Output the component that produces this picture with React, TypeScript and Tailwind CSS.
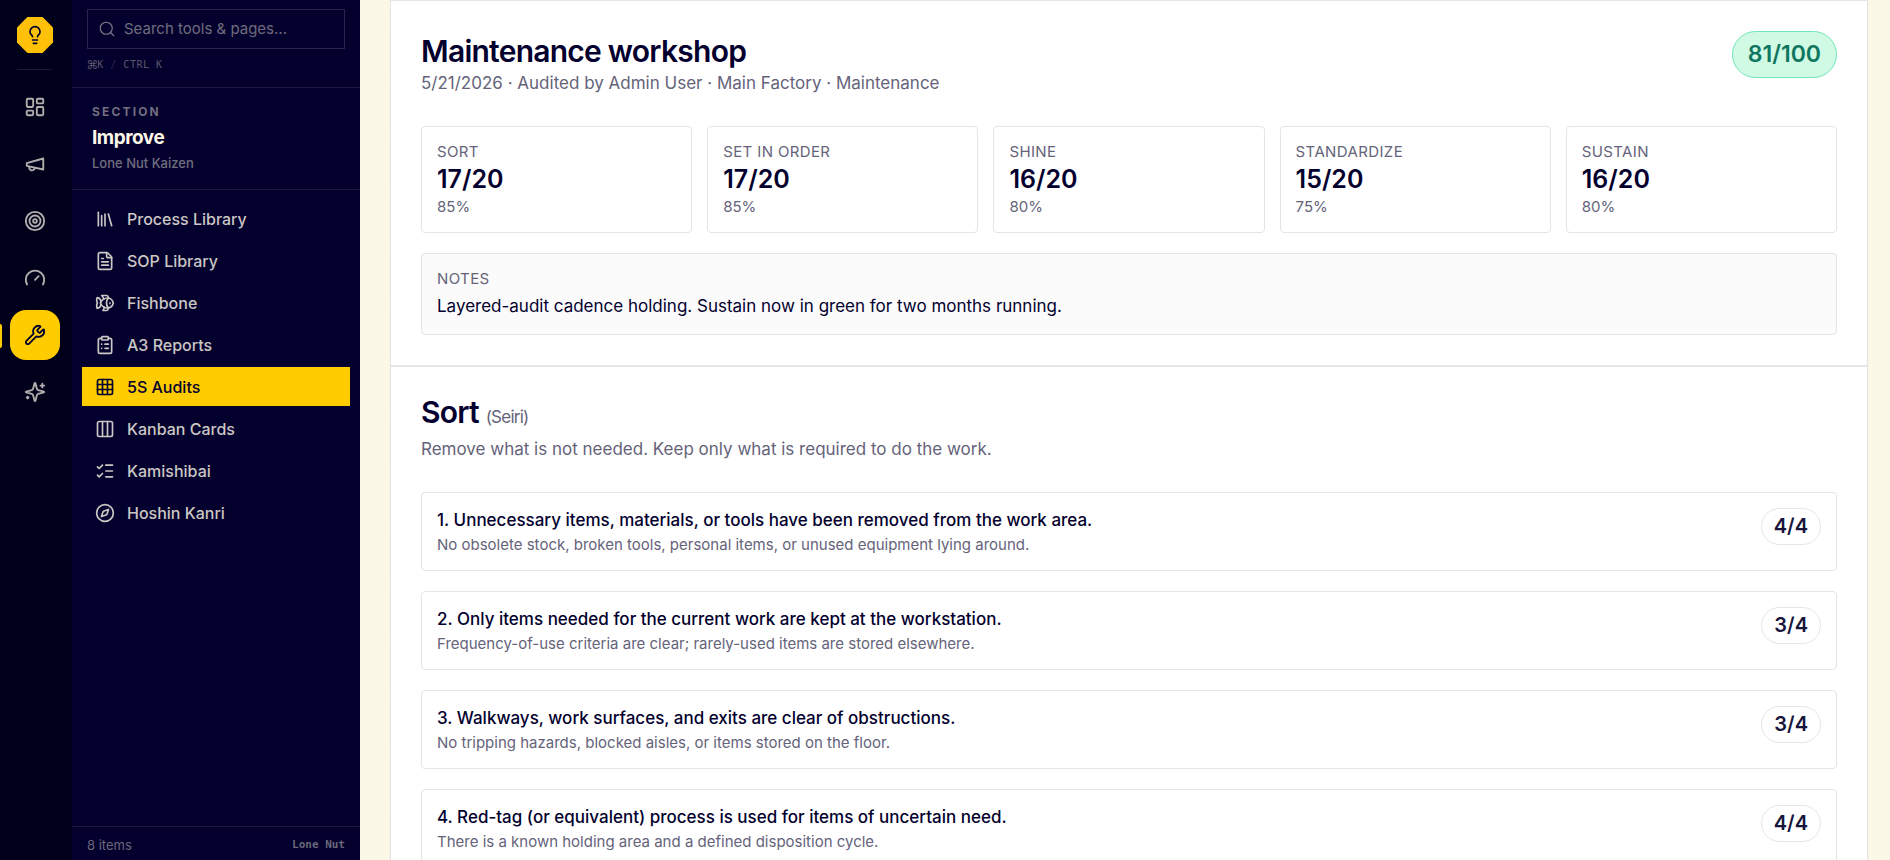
import { useState } from "react";
import type { ReactNode } from "react";
import {
	ClipboardList,
	Columns3,
	Compass,
	FileText,
	Fish,
	Gauge,
	Grid3x3,
	LayoutDashboard,
	Library,
	Lightbulb,
	ListChecks,
	Search,
	Target,
	Wrench,
} from "lucide-react";
import type { LucideIcon } from "lucide-react";

const MegaphoneIcon = () => (
	<RailSvg>
		<path d="m3 11 18-5v12L3 14v-3z" />
		<path d="M11.6 16.8a3 3 0 1 1-5.8-1.6" />
	</RailSvg>
);

const SparklesIcon = () => (
	<RailSvg>
		<path d="M9.937 15.5A2 2 0 0 0 8.5 14.063l-6.135-1.582a.5.5 0 0 1 0-.962L8.5 9.936A2 2 0 0 0 9.937 8.5l1.582-6.135a.5.5 0 0 1 .963 0L14.063 8.5A2 2 0 0 0 15.5 9.937l6.135 1.581a.5.5 0 0 1 0 .964L15.5 14.063a2 2 0 0 0-1.437 1.437l-1.582 6.135a.5.5 0 0 1-.963 0z" />
		<path d="M20 3v4M22 5h-4M4 17v2M5 18H3" />
	</RailSvg>
);

function RailSvg({ children }: { children: ReactNode }) {
	return (
		<svg
			viewBox="0 0 24 24"
			className="size-[22px]"
			fill="none"
			stroke="currentColor"
			strokeWidth={2}
			strokeLinecap="round"
			strokeLinejoin="round"
			aria-hidden="true"
		>
			{children}
		</svg>
	);
}

const RAIL: Array<{ label: string; icon: ReactNode }> = [
	{ label: "Dashboard", icon: <LayoutDashboard className="size-[22px]" /> },
	{ label: "Announce", icon: <MegaphoneIcon /> },
	{ label: "Goals", icon: <Target className="size-[22px]" /> },
	{ label: "Measure", icon: <Gauge className="size-[22px]" /> },
	{ label: "Improve", icon: <Wrench className="size-[22px]" /> },
	{ label: "Assistant", icon: <SparklesIcon /> },
];

const NAV: Array<{ label: string; icon: LucideIcon }> = [
	{ label: "Process Library", icon: Library },
	{ label: "SOP Library", icon: FileText },
	{ label: "Fishbone", icon: Fish },
	{ label: "A3 Reports", icon: ClipboardList },
	{ label: "5S Audits", icon: Grid3x3 },
	{ label: "Kanban Cards", icon: Columns3 },
	{ label: "Kamishibai", icon: ListChecks },
	{ label: "Hoshin Kanri", icon: Compass },
];

const SCORES = [
	{ label: "Sort", score: 17 },
	{ label: "Set in order", score: 17 },
	{ label: "Shine", score: 16 },
	{ label: "Standardize", score: 15 },
	{ label: "Sustain", score: 16 },
];

const SORT_ITEMS = [
	{
		title: "Unnecessary items, materials, or tools have been removed from the work area.",
		hint: "No obsolete stock, broken tools, personal items, or unused equipment lying around.",
		score: 4,
	},
	{
		title: "Only items needed for the current work are kept at the workstation.",
		hint: "Frequency-of-use criteria are clear; rarely-used items are stored elsewhere.",
		score: 3,
	},
	{
		title: "Walkways, work surfaces, and exits are clear of obstructions.",
		hint: "No tripping hazards, blocked aisles, or items stored on the floor.",
		score: 3,
	},
	{
		title: "Red-tag (or equivalent) process is used for items of uncertain need.",
		hint: "There is a known holding area and a defined disposition cycle.",
		score: 4,
	},
];

function Rail() {
	const [active, setActive] = useState("Improve");

	return (
		<nav aria-label="Sections" className="flex w-[72px] shrink-0 flex-col bg-[#00001a] pl-2.5 pt-[17px]">
			<a href="#home" aria-label="Home" className="ml-[7px] size-9">
				<span className="flex size-9 items-center justify-center bg-[#ffc107] text-[#03002e] [clip-path:polygon(29%_0,71%_0,100%_29%,100%_71%,71%_100%,29%_100%,0_71%,0_29%)]">
					<Lightbulb className="size-5" />
				</span>
			</a>
			<div className="ml-[7px] mt-4 h-px w-[35px] bg-white/10" />
			<div className="mt-3 flex flex-col gap-[7px]">
				{RAIL.map((item) => {
					const isActive = item.label === active;

					return (
						<button
							key={item.label}
							type="button"
							aria-label={item.label}
							aria-pressed={isActive}
							onClick={() => setActive(item.label)}
							className={`relative flex size-[50px] items-center justify-center rounded-2xl ${isActive ? "bg-[#ffcc00] text-[#03002e]" : "text-[#b3afae]"}`}
						>
							{isActive ? <span className="absolute -left-2.5 top-[14px] h-6 w-0.5 rounded-r bg-[#ffcc00]" /> : null}
							{item.icon}
						</button>
					);
				})}
			</div>
		</nav>
	);
}

function Sidebar() {
	const [current, setCurrent] = useState("5S Audits");

	return (
		<aside className="flex w-72 shrink-0 flex-col bg-[#03002e]">
			<div className="border-b border-white/10 px-[15px] pb-3 pt-[9px]">
				<label className="flex h-10 items-center gap-2 border border-white/15 px-2.5 text-[#7d7a88]">
					<Search className="size-[18px] shrink-0" strokeWidth={1.5} />
					<input
						type="search"
						aria-label="Search tools and pages"
						placeholder="Search tools & pages..."
						className="w-full min-w-0 bg-transparent text-[15px] outline-none placeholder:text-[#6f6c7c]"
					/>
				</label>
				<p className="mt-1.5 h-5 font-['DejaVu_Sans_Mono',monospace] text-[10px] leading-5 tracking-wider text-[#5a576b]">
					<span className="align-middle text-[17px] leading-none tracking-normal">⌘</span>K{" "}
					<span className="text-[#2c2a4a]">/</span> CTRL K
				</p>
			</div>
			<div className="border-b border-white/10 px-5 pb-4 pt-[14px]">
				<p className="text-[12px] font-bold uppercase leading-5 tracking-[0.18em] text-[#716e7f]">Section</p>
				<p className="mt-px text-[19px] font-bold leading-[30px] tracking-tight text-[#fdf8e8]">Improve</p>
				<p className="text-[13px] font-medium leading-5 text-[#716e7f]">Lone Nut Kaizen</p>
			</div>
			<nav aria-label="Improve" className="flex flex-1 flex-col gap-[3px] px-2.5 py-[9px]">
				{NAV.map(({ label, icon: Icon }) => {
					const isCurrent = label === current;

					return (
						<a
							key={label}
							href="#page"
							aria-current={isCurrent ? "page" : undefined}
							onClick={() => setCurrent(label)}
							className={`flex h-[39px] items-center gap-3 px-[13px] text-[16px] font-medium ${isCurrent ? "bg-[#ffcc00] text-[#03002e]" : "text-[#cbc7c3]"}`}
						>
							<Icon className="size-5 shrink-0" strokeWidth={2} />
							{label}
						</a>
					);
				})}
			</nav>
			<div className="flex h-[34px] items-center justify-between border-t border-white/10 px-[15px] pt-1 text-[#6a6779]">
				<span className="text-[13px]">8 items</span>
				<span className="font-['DejaVu_Sans_Mono',monospace] text-[11px] font-bold">Lone Nut</span>
			</div>
		</aside>
	);
}

function AuditHeader() {
	return (
		<section className="border border-[#e5e5e5] bg-white p-[30px] shadow-xs">
			<div className="flex items-start justify-between">
				<div>
					<h1 className="text-[30px] font-semibold leading-10 tracking-tight">Maintenance workshop</h1>
					<p className="text-[17px] leading-[25px] text-[#65637a]">
						5/21/2026 · Audited by Admin User · Main Factory · Maintenance
					</p>
				</div>
				<span className="rounded-full border border-[#6ee7b7] bg-[#d1fae5] px-[15px] py-[5px] text-[23px] font-semibold leading-[35px] text-[#0f7660]">
					81/100
				</span>
			</div>

			<div className="mt-[30px] grid grid-cols-5 gap-[15px]">
				{SCORES.map(({ label, score }) => (
					<div key={label} className="rounded border border-[#e5e5e5] p-[15px]">
						<p className="text-[15px] uppercase leading-5 tracking-wide text-[#65637a]">{label}</p>
						<p className="text-[25px] font-semibold leading-[35px]">{score}/20</p>
						<p className="text-[15px] leading-5 text-[#65637a]">{score * 5}%</p>
					</div>
				))}
			</div>

			<div className="mt-5 rounded border border-[#e5e5e5] bg-[#fbfbfb] p-[15px]">
				<p className="text-[15px] uppercase leading-5 tracking-wide text-[#65637a]">Notes</p>
				<p className="mt-[5px] text-[17px] leading-[25px]">
					Layered-audit cadence holding. Sustain now in green for two months running.
				</p>
			</div>
		</section>
	);
}

function SortSection() {
	return (
		<section className="border border-[#e5e5e5] bg-white p-[30px] shadow-xs">
			<h2 className="text-[30px] font-semibold leading-[30px] tracking-tight">
				Sort <span className="text-[17px] font-normal text-[#65637a]">(Seiri)</span>
			</h2>
			<p className="mt-[5px] text-[17px] leading-[25px] text-[#65637a]">
				Remove what is not needed. Keep only what is required to do the work.
			</p>
			<ol className="mt-[30px] flex flex-col gap-5">
				{SORT_ITEMS.map((item, index) => (
					<li key={item.title} className="flex items-start justify-between gap-5 rounded border border-[#e5e5e5] p-[15px]">
						<div>
							<p className="text-[17px] font-medium leading-[25px]">
								{index + 1}. {item.title}
							</p>
							<p className="mt-0.5 text-[15px] leading-5 text-[#65637a]">{item.hint}</p>
						</div>
						<span className="rounded-full border border-[#e5e5e5] px-3 py-[5px] text-[20px] font-semibold leading-[25px] text-[#17153b]">
							{item.score}/4
						</span>
					</li>
				))}
			</ol>
		</section>
	);
}

export default function App() {
	return (
		<div className="flex h-screen overflow-hidden font-[Inter,sans-serif] text-[#03002e]">
			<Rail />
			<Sidebar />
			<main className="min-w-0 flex-1 overflow-hidden bg-[#fcf8e8] bg-[radial-gradient(#f9f4e3_1px,transparent_1px)] bg-[size:7px_7px] pl-[30px] pr-[22px]">
				<AuditHeader />
				<SortSection />
			</main>
		</div>
	);
}
